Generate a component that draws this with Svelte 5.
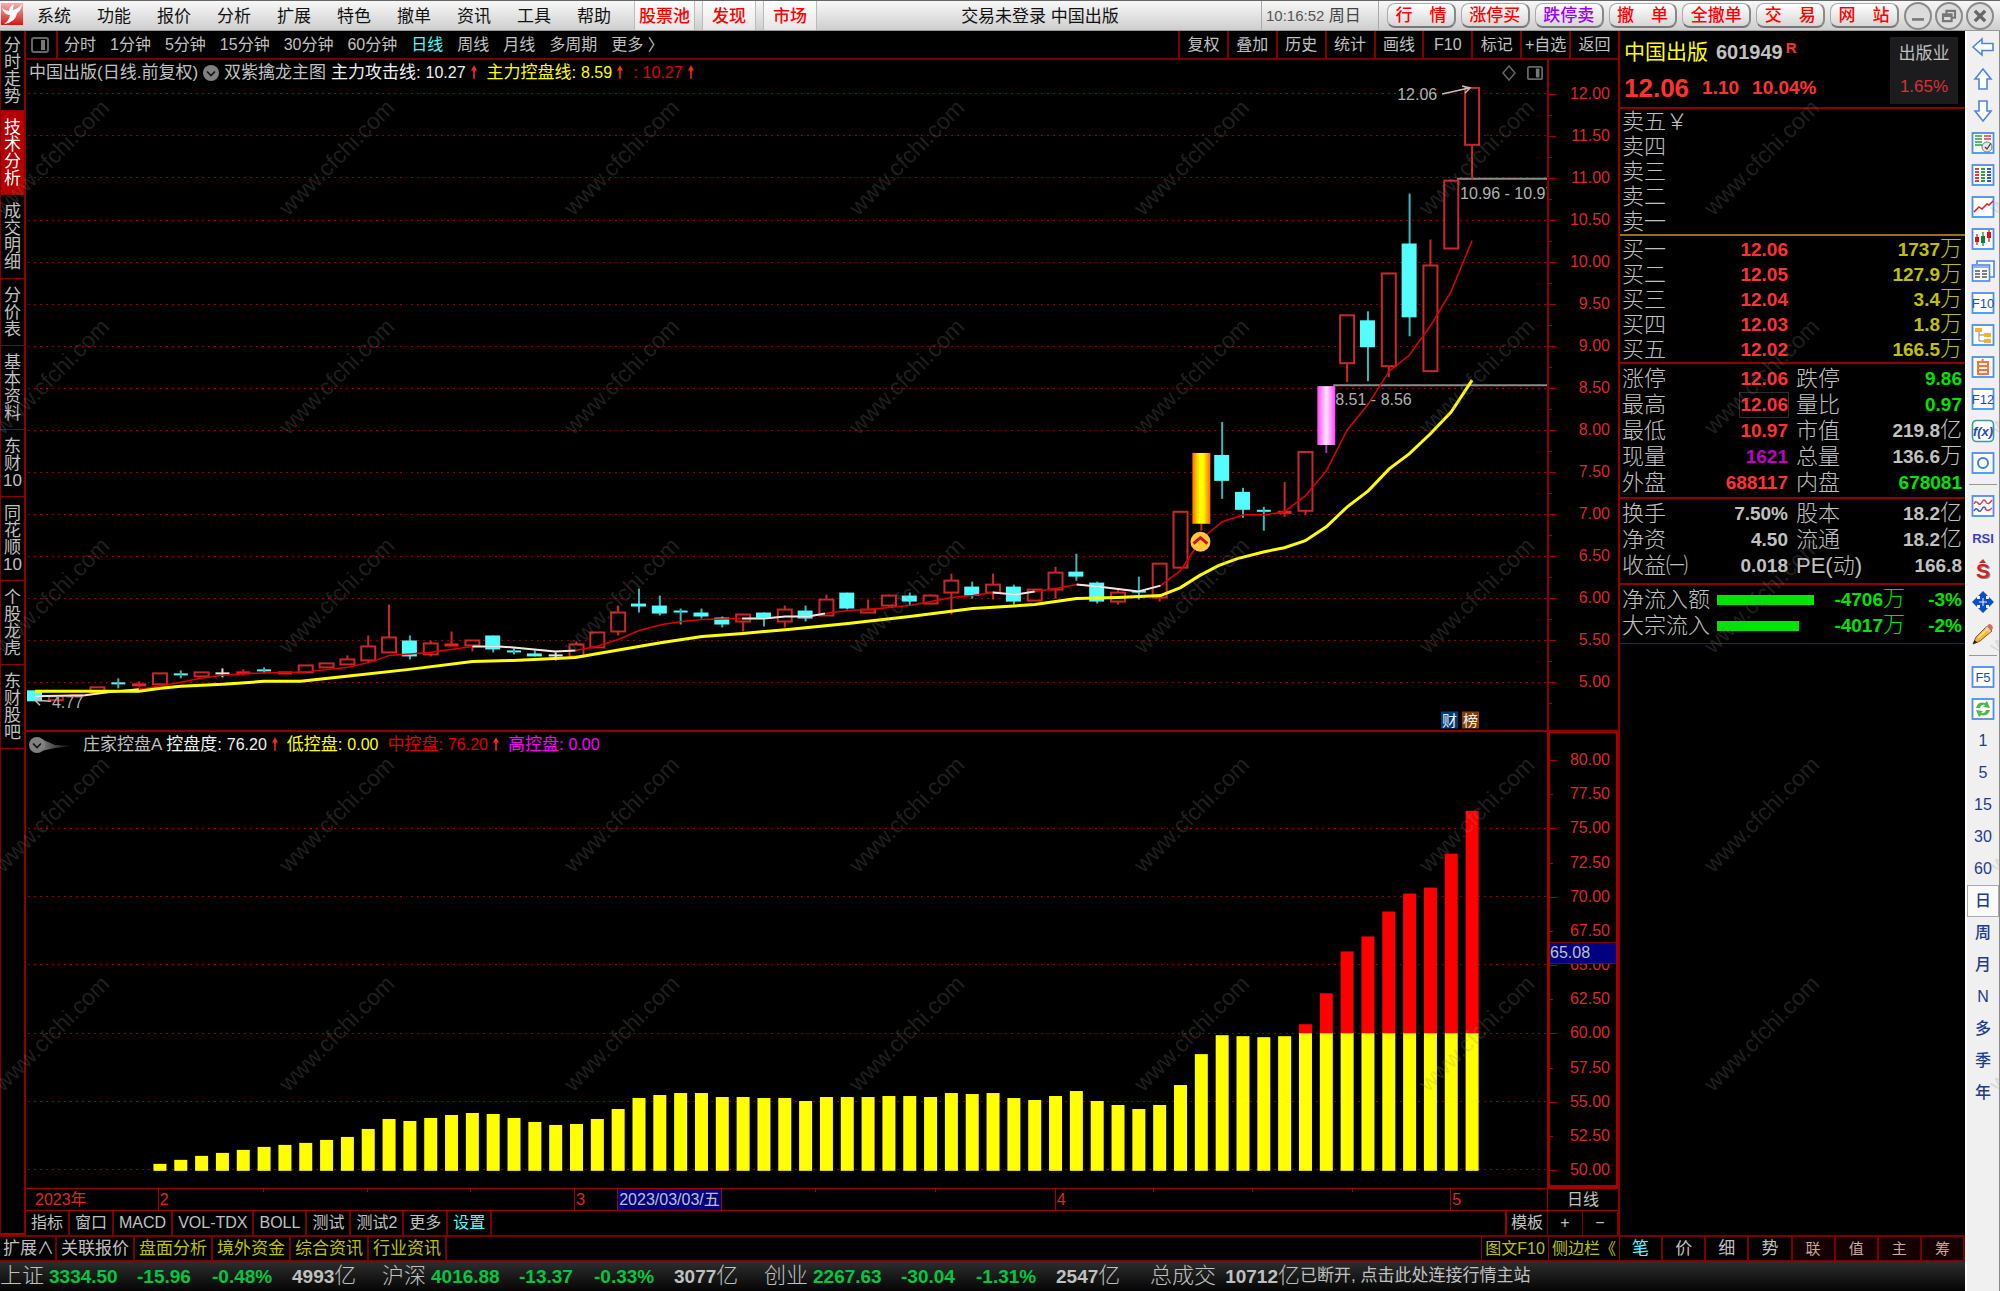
<script>
  const menus = ['系统', '功能', '报价', '分析', '扩展', '特色', '撤单', '资讯', '工具', '帮助'];
  const hot = ['股票池', '发现', '市场'];
  const trades = ['行　情', '涨停买', '跌停卖', '撤　单', '全撤单', '交　易', '网　站'];
  const periods = ['分时', '1分钟', '5分钟', '15分钟', '30分钟', '60分钟', '日线', '周线', '月线', '多周期', '更多 〉'];
  const actions = ['复权', '叠加', '历史', '统计', '画线', 'F10', '标记', '+自选', '返回'];
  const sides = [
    ['分', '时', '走', '势'], ['技', '术', '分', '析'], ['成', '交', '明', '细'], ['分', '价', '表'],
    ['基', '本', '资', '料'], ['东', '财', '10'], ['同', '花', '顺', '10'], ['个', '股', '龙', '虎'], ['东', '财', '股', '吧']
  ];
  const indicators = ['指标', '窗口', 'MACD', 'VOL-TDX', 'BOLL', '测试', '测试2', '更多', '设置'];
  const extras = ['扩展∧', '关联报价', '盘面分析', '境外资金', '综合资讯', '行业资讯'];
  const quoteTabs = ['笔', '价', '细', '势', '联', '值', '主', '筹'];
  const tools = [
    'left', 'up', 'down', 'report', 'grid', 'trend', 'candle', 'pages', 'F10', 'tree', 'self', 'F12', 'fx', 'ring', '-',
    'waves', 'rsi', 'dollar', 'move', 'pencil', '-', 'F5', 'refresh'
  ];
  const toolPeriods = ['1', '5', '15', '30', '60', '日', '周', '月', 'N', '多', '季', '年'];

  const asks = ['卖五￥', '卖四', '卖三', '卖二', '卖一'];
  const bids = [
    ['买一', '12.06', '1737', '万'], ['买二', '12.05', '127.9', '万'], ['买三', '12.04', '3.4', '万'],
    ['买四', '12.03', '1.8', '万'], ['买五', '12.02', '166.5', '万']
  ];
  const stats = [
    ['涨停', '12.06', '', 'red'], ['跌停', '9.86', '', 'green'],
    ['最高', '12.06', '', 'red boxed'], ['量比', '0.97', '', 'green'],
    ['最低', '10.97', '', 'red'], ['市值', '219.8', '亿', ''],
    ['现量', '1621', '', 'purple'], ['总量', '136.6', '万', ''],
    ['外盘', '688117', '', 'red'], ['内盘', '678081', '', 'green']
  ];
  const basics = [
    ['换手', '7.50%', ''], ['股本', '18.2', '亿'], ['净资', '4.50', ''],
    ['流通', '18.2', '亿'], ['收益㈠', '0.018', ''], ['PE(动)', '166.8', '']
  ];
  const flows = [['净流入额', 97, '-4706', '-3%'], ['大宗流入', 82, '-4017', '-2%']];
  const indices = [
    ['上证', '3334.50', '-15.96', '-0.48%', '4993'],
    ['沪深', '4016.88', '-13.37', '-0.33%', '3077'],
    ['创业', '2267.63', '-30.04', '-1.31%', '2547']
  ];

  // Chart canvas units: x runs 25..1548, the price pane 60..732, the indicator pane 732..1189.
  const X0 = 25, XW = 1523, P0 = 60, PH = 672, S0 = 732, SH = 457;
  const cx = (i) => 34 + i * 20.855;
  const py = (p) => 94 + (12 - p) * 84.3;
  const sy = (v) => 760 + (80 - v) * 13.7;
  const left = (x) => `${((x - X0) / XW) * 100}%`;
  const ptop = (y) => `${((y - P0) / PH) * 100}%`;
  const stop = (y) => `${((y - S0) / SH) * 100}%`;

  // [kind, body top, body bottom, wick top, wick bottom]; r rise, c fall, w flat
  const candles = [
    ['c', 692, 703], ['r', 698, 702], ['rf', 697], ['r', 689, 694], ['cf', 685, 0, 680, 690], ['rf', 686, 0, 683, 689],
    ['r', 675, 686], ['cf', 676, 0, 672, 680], ['r', 674, 678], ['wf', 675, 0, 670, 679], ['rf', 674, 0, 671, 677],
    ['cf', 672, 0, 669, 675], ['rf', 674, 0], ['r', 667, 674], ['r', 665, 669], ['r', 661, 666, 657, 666],
    ['r', 648, 662, 637, 664], ['r', 639, 654, 606, 654], ['c', 642, 658, 637, 661], ['r', 645, 656, 642, 658],
    ['rf', 646, 0, 633, 648], ['r', 642, 647, 642, 653], ['c', 637, 651, 637, 654], ['cf', 653, 0, 649, 656],
    ['c', 655, 658, 652, 658], ['wf', 657, 0, 654, 662], ['r', 646, 658, 643, 659], ['r', 634, 649],
    ['r', 614, 633, 607, 637], ['c', 605, 608, 590, 614], ['c', 607, 615, 597, 617], ['cf', 613, 0, 610, 626],
    ['c', 614, 618, 610, 620], ['c', 619, 626, 618, 629], ['r', 616, 623, 616, 633], ['c', 614, 620, 614, 628],
    ['r', 611, 623, 607, 629], ['c', 612, 620, 607, 623], ['r', 601, 617, 596, 617], ['c', 594, 610, 594, 611],
    ['r', 611, 614, 601, 614], ['r', 597, 607, 596, 609], ['c', 597, 603, 594, 607], ['r', 597, 605, 596, 605],
    ['r', 582, 594, 575, 616], ['c', 588, 597, 583, 600], ['r', 586, 594, 575, 601], ['c', 588, 603, 586, 606],
    ['r', 591, 602], ['r', 574, 591, 568, 600], ['c', 573, 578, 555, 582], ['c', 584, 603, 583, 605],
    ['r', 594, 603, 590, 606], ['cf', 593, 0, 578, 601], ['r', 565, 599, 565, 603], ['r', 513, 569],
    ['gold', 454, 525, 525, 532], ['c', 456, 482, 423, 500], ['c', 493, 511, 489, 519], ['cf', 512, 0, 508, 532],
    ['rf', 513, 0, 483, 518], ['r', 453, 512, 453, 516], ['pink', 387, 446, 446, 454], ['r', 316, 364, 316, 383],
    ['c', 321, 348, 312, 382], ['r', 274, 367, 274, 378], ['c', 244, 318, 194, 337], ['r', 266, 372, 240, 372],
    ['r', 181, 249], ['r', 88, 145, 88, 179]
  ];

  const attack = '34,698 84,697 107,694 146,690 180,684 200,680 222,677 250,675 285,674 300,674 346,669 369,664 389,657 429,654 472,648 498,648 513,649 555,653 575,652 596,648 618,641 639,632 662,626 682,623 702,621 742,620 764,620 785,618 808,618 825,615 848,612 868,611 910,607 931,603 952,599 973,597 993,594 1015,596 1035,593 1056,590 1077,586 1098,588 1139,593 1161,587 1181,572 1202,540 1223,523 1244,516 1265,516 1285,513 1306,497 1327,472 1348,431 1369,405 1390,372 1410,356 1431,327 1452,292 1473,241';
  const pauses = [
    '34,698 84,697 107,694 138,691', '472,648 498,648 513,649 555,653 575,652',
    '742,620 764,620 785,618 808,618 825,615', '993,594 1015,596 1035,593', '1077,586 1098,588 1139,593 1161,587'
  ];
  const control = '34,693 138,693 160,690 180,688 222,686 263,683 300,683 346,678 409,671 472,663 513,662 575,659 598,655 627,650 662,644 702,638 743,635 788,631 848,625 910,618 973,610 1035,606 1077,600 1118,599 1161,597 1181,589 1200,577 1219,567 1238,560 1265,553 1285,549 1306,542 1327,528 1348,508 1369,492 1390,470 1410,455 1431,435 1452,413 1473,381';

  const bars = [
    1165, 1161, 1157, 1154, 1151, 1148, 1146, 1144, 1141, 1138, 1130, 1120, 1122, 1119, 1116, 1114, 1115, 1119, 1123,
    1126, 1125, 1120, 1110, 1099, 1096, 1094, 1094, 1098, 1098, 1099, 1099, 1102, 1098, 1098, 1098, 1097, 1097, 1098, 1094,
    1095, 1094, 1099, 1101, 1097, 1092, 1102, 1106, 1110, 1106, 1086, 1055, 1036, 1037, 1038, 1037, 1025, 994, 952, 937,
    912, 894, 888, 854, 811
  ];

  const priceTicks = Array.from({ length: 15 }, (_, k) => 12 - k * 0.5);
  const valueTicks = Array.from({ length: 13 }, (_, k) => 80 - k * 2.5);
  const months = [[157, '2'], [574, '3'], [1055, '4'], [1451, '5']];
  const weeks = [262, 366, 470, 815, 935, 1153, 1253, 1353];
  const marks = [];
  for (let r = 0; r < 5; r++) for (let c = 0; c < 8; c++) marks.push([51 + c * 285, 157 + r * 219]);
</script>

{#snippet paneIcon()}
  <svg class="pane-icon" viewBox="0 0 18 16"><rect x="1" y="1" width="16" height="14" rx="2" fill="none" stroke="#666" stroke-width="2" /><rect x="10" y="3" width="4" height="10" fill="#777" /></svg>
{/snippet}

{#snippet fold()}
  <svg class="fold" viewBox="0 0 16 16"><circle cx="8" cy="8" r="8" fill="#808080" /><path d="M4 6.5l4 4 4-4" fill="none" stroke="#111" stroke-width="1.6" /></svg>
{/snippet}

{#snippet rise()}
  <svg class="rise" viewBox="0 0 8 18"><path d="M4 0l4 7H5v11H3V7H0z" fill="#ff2828" /></svg>
{/snippet}

{#snippet toolIcon(name)}
  <svg class="tool-icon" viewBox="0 0 24 24">
    {#if name === 'left'}
      <path d="M2 12l9-8v4.500h11v7H11V20z" fill="#fff" stroke="#4f83e3" stroke-width="1.600" />
    {:else if name === 'up'}
      <path d="M12 2l8 10h-4v10H8V12H4z" fill="#fff" stroke="#4f83e3" stroke-width="1.600" />
    {:else if name === 'down'}
      <path d="M12 22l8-10h-4V2H8v10H4z" fill="#fff" stroke="#4f83e3" stroke-width="1.600" />
    {:else if name === 'rsi'}
      <text x="12" y="17" text-anchor="middle" font-size="13" font-weight="700" fill="#3c3ccc">RSI</text>
    {:else if name === 'dollar'}
      <text x="13" y="21" text-anchor="middle" font-size="21" font-weight="700" fill="#888">S</text>
      <text x="12" y="20" text-anchor="middle" font-size="21" font-weight="700" fill="#c82828">S</text>
      <path d="M8 5l4-4 3 4z" fill="#c82828" />
    {:else if name === 'move'}
      <path d="M12 1l5 5H7zM12 23l5-5H7zM1 12l5-5v10zM23 12l-5-5v10z" fill="#0a50c0" />
      <path d="M12 5v14M5 12h14" stroke="#0a50c0" stroke-width="6" /><path d="M12 8v8M8 12h8" stroke="#f0f0f0" stroke-width="1" />
    {:else if name === 'pencil'}
      <path d="M2 22l3-7L16 4l5 5L9 19z" fill="#f5b63c" stroke="#7a5a2a" stroke-width="1" />
      <path d="M16 4l2-2q3 0 4 4l-2 3z" fill="#e0655a" /><path d="M14 6l4 5 2-2-4-5z" fill="#c8c8c8" />
      <path d="M2 22l1.500-4 3 2.500z" fill="#222" /><path d="M7 16L17 6.500" stroke="#ffe08a" stroke-width="1.500" />
    {:else if name === 'fx'}
      <rect x="1.500" y="1.500" width="21" height="21" rx="4" fill="#fff" stroke="#3c9a9a" stroke-width="1.600" />
      <text x="12" y="17" text-anchor="middle" font-size="13" font-style="italic" font-weight="700" fill="#2846c8">f(x)</text>
    {:else if name === 'pages'}
      <path d="M6 5V2h17v16h-4" fill="#fff" stroke="#4f83e3" stroke-width="1.600" />
      <rect x="1.500" y="6" width="17" height="16" fill="#fff" stroke="#4f83e3" stroke-width="1.600" />
      <path d="M4 12h5M11 12h5M4 15h5M11 15h5M4 18h5M11 18h5" stroke="#555" stroke-width="1.400" /><path d="M2 8h16" stroke="#8fb4f5" stroke-width="2" />
    {:else}
      <rect x="1.500" y="2" width="21" height="20" fill="#fff" stroke="#4f8fe8" stroke-width="1.800" />
      {#if name === 'report'}
        <path d="M4 5h7M4 8h7M4 11h7M4 14h7" stroke="#28a03c" stroke-width="1.600" /><path d="M13 5h7M13 8h7" stroke="#e03c3c" stroke-width="1.600" />
        <circle cx="16" cy="16" r="5" fill="#e8e8e8" stroke="#777" /><path d="M14 16l2 2 4-6" fill="none" stroke="#444" stroke-width="1.300" />
      {:else if name === 'grid'}
        <path d="M6 5v15" stroke="#e03c3c" stroke-width="4" stroke-dasharray="2 1" /><path d="M12 5v15" stroke="#28a03c" stroke-width="4" stroke-dasharray="2 1" /><path d="M18 5v15" stroke="#3c50e0" stroke-width="4" stroke-dasharray="2 1" />
      {:else if name === 'trend'}
        <path d="M3 17l5-5 3 2 5-5 2 1 4-4" fill="none" stroke="#e02020" stroke-width="1.500" />
      {:else if name === 'candle'}
        <path d="M6 7v11M18 3v12" stroke="#e01010" stroke-width="1.200" /><path d="M12 5v14" stroke="#108030" stroke-width="1.200" />
        <rect x="4" y="10" width="4" height="5" fill="#e01010" /><rect x="10" y="9" width="4" height="7" fill="#108030" /><rect x="16" y="5" width="4" height="6" fill="#e01010" />
      {:else if name === 'tree'}
        <path d="M8 8v10h6M8 12h6" fill="none" stroke="#888" /><path d="M4 5h7v4H4zM13 10h7v4h-7zM13 16h7v4h-7z" fill="#f5b428" />
      {:else if name === 'self'}
        <path d="M12 4l-1 3M7 7h10v12H7zM7 11h10M7 15h10" fill="none" stroke="#ff7030" stroke-width="2" />
      {:else if name === 'ring'}
        <circle cx="12" cy="12" r="5" fill="none" stroke="#3c82dc" stroke-width="2" />
      {:else if name === 'waves'}
        <path d="M3 10q2-4 4-1t4-1 4 0 6-2" fill="none" stroke="#e03c50" stroke-width="1.500" /><path d="M3 17q2-4 4-1t4-1 4 0" fill="none" stroke="#3c50e0" stroke-width="1.500" /><path d="M14 15q3 3 7-1" fill="none" stroke="#e03c50" stroke-width="1.500" />
      {:else if name === 'refresh'}
        <path d="M5 11q2-7 9-5l2-2 3 7-7-1 2-2q-4-1-5 3z" fill="#4cb848" /><path d="M19 13q-2 7-9 5l-2 2-3-7 7 1-2 2q4 1 5-3z" fill="#4cb848" />
      {:else}
        <text x="12" y="17" text-anchor="middle" font-size="13" fill="#2846c8">{name}</text>
      {/if}
    {/if}
  </svg>
{/snippet}

<div class="app">
  <header class="topbar">
    <svg class="logo" viewBox="0 0 24 24">
      <defs><linearGradient id="lg" x1="0" y1="0" x2="0" y2="1"><stop offset="0" stop-color="#f4b0b0" /><stop offset="1" stop-color="#d01818" /></linearGradient></defs>
      <rect x="1" y="1" width="22" height="22" fill="url(#lg)" /><path d="M2 6q2 7 8 7-1 6-6 9 12-2 13-11 4-2 5-9-4 5-9 6 0-3 1-6-5 3-5 7-4 0-7-3z" fill="#fff" />
    </svg>
    <nav class="menus">{#each menus as m}<button>{m}</button>{/each}</nav>
    <nav class="hot">{#each hot as h}<button>{h}</button>{/each}</nav>
    <div class="title">交易未登录 中国出版</div>
    <div class="clock"><span>10:16:52</span> 周日</div>
    <nav class="trades">{#each trades as t, i}<button class:violet={i === 2}>{t}</button>{/each}</nav>
    <div class="wins">
      <button aria-label="最小化"><svg viewBox="0 0 28 28"><path d="M7 18h14" stroke="#777" stroke-width="3" /></svg></button>
      <button aria-label="还原"><svg viewBox="0 0 28 28"><path d="M11 12V8h10v8h-4M7 12h10v8H7zM7 14h10" fill="none" stroke="#777" stroke-width="2.500" /></svg></button>
      <button aria-label="关闭"><svg viewBox="0 0 28 28"><path d="M8 8l12 12M20 8L8 20" stroke="#666" stroke-width="4" /></svg></button>
    </div>
  </header>

  <div class="body">
    <div class="desk">
      <div class="upper">
        <nav class="side">
          {#each sides as s, i}<button class:active={i === 1}>{#each s as ch}<span>{ch}</span>{/each}</button>{/each}
        </nav>

        <main class="center">
          <div class="periods">
            <button class="pane-toggle" aria-label="分栏">{@render paneIcon()}</button>
            <div class="list">{#each periods as p}<button class:cyan={p === '日线'}>{p}</button>{/each}</div>
            <div class="actions">{#each actions as a}<button>{a}</button>{/each}</div>
          </div>

          <section class="pane price">
            <div class="plot">
              <svg class="canvas" viewBox="{X0} {P0} {XW} {PH}" preserveAspectRatio="none">
                <defs>
                  <linearGradient id="gold"><stop offset="0" stop-color="#ff6a00" /><stop offset="0.4" stop-color="#ffff00" /><stop offset="0.6" stop-color="#ffff00" /><stop offset="1" stop-color="#ff6a00" /></linearGradient>
                  <linearGradient id="pink"><stop offset="0" stop-color="#ff40ff" /><stop offset="0.5" stop-color="#ffe8ff" /><stop offset="1" stop-color="#ff40ff" /></linearGradient>
                </defs>
                {#each priceTicks as p}<line class="dots" x1={X0 + 2} x2={X0 + XW} y1={py(p)} y2={py(p)} />{/each}
                <path d="M1458 179H1548M1334 386H1548" stroke="#8c8c8c" stroke-width="2" />
                {#each candles as [k, a, b, wt, wb], i}
                  {@const x = cx(i)}
                  {#if k.endsWith('f')}
                    <rect class={k} x={x - 7} y={a - 1} width="14" height={k === 'rf' ? 3 : 2} />
                    {#if wt}<line class="wick {k[0]}" x1={x} x2={x} y1={wt} y2={wb} />{/if}
                  {:else if k === 'r'}
                    {#if wt}<path class="wick r" d="M{x} {wt}V{a}M{x} {b}V{wb}" />{/if}
                    <rect class="hollow" x={x - 7} y={a} width="14" height={b - a} />
                  {:else if k === 'c'}
                    {#if wt}<line class="wick c" x1={x} x2={x} y1={wt} y2={wb} />{/if}
                    <rect class="cf" x={x - 8} y={a} width="15" height={b - a} />
                  {:else}
                    <line class="wick {k}" x1={x} x2={x} y1={wt} y2={wb} />
                    <rect x={x - 9} y={a} width="18" height={b - a} fill="url(#{k})" />
                  {/if}
                {/each}
                <polyline points={attack} fill="none" stroke="#e00000" stroke-width="1.500" />
                {#each pauses as p}<polyline points={p} fill="none" stroke="#e8e8e8" stroke-width="2" />{/each}
                <polyline points={control} fill="none" stroke="#ffff00" stroke-width="3" />
                <path d="M1443 94L1470 88M1463 86L1471 88L1466 93M50 703L34 702M40 699L34 702L39 707" fill="none" stroke="#c0c0c0" stroke-width="1.500" />
                <circle cx="1201" cy="543" r="10" fill="#ffc83c" /><path d="M1194 545l7-6 7 6" fill="none" stroke="#c81414" stroke-width="3" />
              </svg>
              <span class="note" style:left={left(1398)} style:top={ptop(95)}>12.06</span>
              <span class="note" style:left={left(1461)} style:top={ptop(194)}>10.96 - 10.97</span>
              <span class="note" style:left={left(1336)} style:top={ptop(401)}>8.51 - 8.56</span>
              <span class="note" style:left={left(51)} style:top={ptop(705)}>4.77</span>
              <span class="tag cai" style:left={left(1442)} style:top={ptop(722)}>财</span>
              <span class="tag bang" style:left={left(1463)} style:top={ptop(722)}>榜</span>
              <div class="legend">
                <span>中国出版(日线.前复权)</span>{@render fold()}<span>双紫擒龙主图</span>
                <span class="white pair">主力攻击线: <b>10.27</b>{@render rise()}</span>
                <span class="yellow pair">主力控盘线: <b>8.59</b>{@render rise()}</span>
                <span class="crimson pair">: <b>10.27</b>{@render rise()}</span>
                <span class="corner"><svg viewBox="0 0 16 16"><path d="M8 1l6 7-6 7-6-7z" fill="none" stroke="#666" stroke-width="1.500" /></svg>{@render paneIcon()}</span>
              </div>
            </div>
            <div class="axis">
              {#each priceTicks as p}
                <i class="tick" style:top={ptop(py(p))}></i><i class="tick minor" style:top={ptop(py(p - 0.25))}></i>
                <span style:top={ptop(py(p))}>{p.toFixed(2)}</span>
              {/each}
            </div>
          </section>

          <section class="pane sub">
            <div class="plot">
              <svg class="canvas" viewBox="{X0} {S0} {XW} {SH}" preserveAspectRatio="none">
                {#each valueTicks as v}{#if v % 5 === 0 && v < 80}<line class="dots" x1={X0 + 2} x2={X0 + XW} y1={sy(v)} y2={sy(v)} />{/if}{/each}
                {#each bars as t, i}
                  {@const x = cx(i + 6) - 6.5}
                  {#if t < 1034}<rect {x} y={t} width="13" height={1034 - t} fill="#f00" />{/if}
                  <rect {x} y={Math.max(t, 1034)} width="13" height={1172 - Math.max(t, 1034)} fill="#ff0" />
                {/each}
              </svg>
              <div class="legend second">
                {@render fold()}
                <svg class="smear" viewBox="0 0 32 16"><defs><linearGradient id="sm"><stop offset="0" stop-color="#808080" /><stop offset="1" stop-color="#808080" stop-opacity="0" /></linearGradient></defs><path d="M0 2L14 8 32 9 14 11 0 14z" fill="url(#sm)" /></svg>
                <span class="name">庄家控盘A</span>
                <span class="white pair">控盘度: <b>76.20</b>{@render rise()}</span>
                <span class="yellow pair">低控盘: <b>0.00</b></span>
                <span class="crimson pair">中控盘: <b>76.20</b>{@render rise()}</span>
                <span class="magenta pair">高控盘: <b>0.00</b></span>
              </div>
            </div>
            <div class="axis boxed-axis">
              {#each valueTicks as v}
                <i class="tick" class:minor={v % 5 !== 0} style:top={stop(sy(v))}></i>
                <span style:top={stop(sy(v))}>{v.toFixed(2)}</span>
              {/each}
              <em style:top={stop(953)}>65.08</em>
            </div>
          </section>

          <div class="dates">
            <div class="scale">
              <span style:left={left(34)}>2023年</span>
              {#each months as [x, m]}<span class="month" style:left={left(x)}>{m}</span>{/each}
              {#each weeks as x}<i style:left={left(x)}></i>{/each}
              <span class="cursor" style:left={left(617)}>2023/03/03/五</span>
            </div>
            <div class="unit">日线</div>
          </div>

          <div class="tabs">
            {#each indicators as t}<button class:cyan={t === '设置'}>{t}</button>{/each}
            <button class="template">模板</button><button class="zoom">+</button><button class="zoom">−</button>
          </div>
        </main>

        <aside class="quote">
          <div class="head">
            <div class="names">
              <div><strong>中国出版</strong><span class="code">601949</span><sup>R</sup></div>
              <div class="now"><b>12.06</b><span>1.10</span><span>10.04%</span></div>
            </div>
            <div class="industry"><span>出版业</span><span>1.65%</span></div>
          </div>
          <table class="book asks"><tbody>
            {#each asks as a}<tr><th>{a}</th><td></td><td></td></tr>{/each}
          </tbody></table>
          <table class="book bids"><tbody>
            {#each bids as [n, p, v, u]}<tr><th>{n}</th><td class="red">{p}</td><td class="olive">{v}<u>{u}</u></td></tr>{/each}
          </tbody></table>
          <dl class="stats">
            {#each stats as [n, v, u, c]}<div><dt>{n}</dt><dd class={c}>{v}<u>{u}</u></dd></div>{/each}
          </dl>
          <dl class="stats basics">
            {#each basics as [n, v, u]}<div><dt>{n}</dt><dd>{v}<u>{u}</u></dd></div>{/each}
          </dl>
          <div class="flows">
            {#each flows as [n, w, v, p]}
              <div><span>{n}</span><span class="track"><i style:width="{w}%"></i></span><b>{v}<u>万</u></b><b>{p}</b></div>
            {/each}
          </div>
        </aside>
      </div>

      <div class="lower">
        <div class="extras">{#each extras as e, i}<button class:olive={i > 1}>{e}</button>{/each}</div>
        <button class="olive f10">图文F10</button><button class="olive bar">侧边栏《</button>
        <div class="qtabs">{#each quoteTabs as q, i}<button class:cyan={i === 0} class:dim={i > 3}>{q}</button>{/each}</div>
      </div>

      <footer class="ticker">
        {#each indices as [n, v, d, p, a]}
          <div class="idx"><span>{n}</span><b>{v}</b><b>{d}</b><b>{p}</b><span class="amt"><b>{a}</b>亿</span></div>
        {/each}
        <div class="total">总成交 <b>10712</b>亿</div>
        <button>已断开, 点击此处连接行情主站</button>
      </footer>
    </div>

    <nav class="tools">
      {#each tools as t}{#if t === '-'}<hr />{:else}<button aria-label={t}>{@render toolIcon(t)}</button>{/if}{/each}
      {#each toolPeriods as t}<button class:on={t === '日'}>{t}</button>{/each}
    </nav>
  </div>

  <svg class="marks" aria-hidden="true">
    {#each marks as [x, y]}<text text-anchor="middle" transform="translate({x + 6} {y + 6}) rotate(-45)">www.cfchi.com</text>{/each}
  </svg>
</div>

<style>
  :global(body) { margin: 0; background: #000; }
  .app {
    position: relative; display: flex; flex-direction: column; min-height: 100vh; overflow: hidden;
    background: #000; color: #c0c0c0;
    font: 16px/20px "Liberation Sans", "Noto Sans CJK SC", sans-serif;
  }
  .app :global(*) { box-sizing: border-box; }
  button { margin: 0; padding: 0; border: 0; background: none; color: inherit; font: inherit; white-space: nowrap; cursor: pointer; }
  svg { display: block; }
  u { text-decoration: none; font-weight: 300; font-size: 22px; line-height: 20px; }

  .topbar {
    display: flex; align-items: stretch; height: 31px; flex: none; border-top: 1px solid #666; border-bottom: 1px solid #999;
    background: linear-gradient(#f8f8f8, #cecece); color: #111; font-size: 17px;
  }
  .logo { width: 24px; height: 24px; margin-top: 1px; }
  .menus { display: flex; }
  .menus button { width: 60px; padding-top: 2px; }
  .hot { display: flex; gap: 7px; margin-left: 10px; }
  .hot button { padding: 2px 9px 0; border: 1px solid #bbb; border-width: 0 1px; background: linear-gradient(#fff, #e6e6e6); color: #f00; font-weight: 500; }
  .hot button:first-child { padding: 2px 4px 0; }
  .title { flex: 1; padding: 2px 0 0 2px; text-align: center; align-self: center; }
  .clock { width: 118px; padding-left: 4px; border: 1px solid #aaa; border-width: 0 1px; color: #444; font-size: 16px; line-height: 30px; white-space: nowrap; }
  .clock span { font-size: 15px; color: #555; }
  .trades { display: flex; gap: 5px; width: 512px; margin-left: 8px; align-items: center; }
  .trades button {
    flex: 1; height: 25px; padding-top: 1px; line-height: 22px; border: 1px solid #aaa; border-bottom: 2px solid #777; border-right: 2px solid #888; border-radius: 8px;
    background: linear-gradient(#fff, #d6d6d6); color: #f00; font-weight: 500;
  }
  .trades .violet { color: #90f; }
  .wins { display: flex; gap: 3px; align-items: center; margin: 0 6px 0 5px; }
  .wins button { width: 28px; height: 28px; border: 2px solid #8a8a8a; border-radius: 50%; background: #dcdcdc; }
  .wins svg { width: 24px; height: 24px; }

  .body { flex: 1; display: flex; }
  .desk { flex: 1; min-width: 0; display: flex; flex-direction: column; }
  .upper { flex: 1; display: flex; }

  .side { width: 26px; flex: none; border: 1px solid #800000; border-right: 2px solid #8b0000; border-top: 0; border-bottom: 2px solid #a00000; font-size: 17px; }
  .side button { display: flex; flex-direction: column; width: 100%; padding: 8px 0 7px; border-bottom: 1px solid #900000; }
  .side button:first-child { padding: 6px 0 5px; }
  .side span { line-height: 17px; }
  .side .active { background: #b40000; color: #fff; }

  .center { flex: 1; min-width: 0; display: flex; flex-direction: column; }
  .periods { display: flex; height: 29px; flex: none; border-bottom: 2px solid #780000; }
  .pane-toggle { width: 32px; padding-left: 5px; border-right: 2px solid #800000; }
  .pane-icon { width: 18px; height: 16px; }
  .list { display: flex; gap: 14px; margin-left: 6px; flex: 1; }
  .actions { display: grid; grid-template-columns: repeat(9, 1fr); width: 440px; }
  .actions button { border-left: 2px solid #800000; }
  .cyan { color: #54fcfc; }

  .pane { display: grid; grid-template-columns: minmax(0, 1fr) 71px; }
  .price { flex: 672 1 0; min-height: 400px; }
  .sub { flex: 457 1 0; min-height: 270px; border-top: 2px solid #900000; }
  .plot { position: relative; overflow: hidden; }
  .canvas { position: absolute; inset: 0; width: 100%; height: 100%; }
  .dots { stroke: #900000; stroke-width: 1; stroke-dasharray: 2 4; shape-rendering: crispEdges; }
  .wick { stroke-width: 2; stroke: #c82828; fill: none; }
  .wick.c { stroke: #38b8b8; }
  .wick.w { stroke: #ddd; }
  .wick.pink { stroke: #b030b0; }
  .hollow { fill: #000; stroke: #c82828; stroke-width: 2; }
  .cf { fill: #54fcfc; }
  .rf { fill: #f02020; }
  .wf { fill: #e8e8e8; }
  .note { position: absolute; transform: translateY(-50%); white-space: nowrap; color: #b0b0b0; }
  .tag { position: absolute; transform: translateY(-50%); width: 17px; font-size: 15px; line-height: 17px; text-align: center; color: #e8f0ff; }
  .cai { background: #003c78; }
  .bang { background: #824000; }
  .legend { position: relative; display: flex; align-items: center; gap: 5px; height: 25px; padding-left: 3px; font-size: 17px; white-space: nowrap; }
  .legend b { font-weight: 400; font-size: 16px; }
  .fold { width: 16px; height: 16px; flex: none; }
  .smear { width: 32px; height: 16px; margin-left: -8px; }
  .rise { display: inline-block; width: 6px; height: 18px; margin-left: 5px; vertical-align: -3px; }
  .pair { margin-right: 5px; }
  .second { gap: 4px; }
  .second .pair { margin-right: 5px; }
  .second .name { margin-left: 6px; }
  .white { color: #f0f0f0; }
  .yellow { color: #ff0; }
  .crimson { color: #e00000; }
  .magenta { color: #f0f; }
  .corner { display: flex; align-items: center; gap: 10px; margin-left: auto; padding-right: 4px; }
  .corner svg { width: 16px; height: 16px; }

  .axis { position: relative; border-left: 2px solid #900000; color: #dc2828; }
  .axis span { position: absolute; right: 8px; transform: translateY(-50%); }
  .axis .tick { position: absolute; left: 0; width: 7px; height: 1px; background: #a00000; }
  .axis .minor { width: 3px; }
  .boxed-axis { border-left: 3px solid #a80000; box-shadow: inset -2px -3px #a80000, inset 0 1px #a80000; }
  .axis em { position: absolute; left: 0; right: 2px; transform: translateY(-50%); border: 1px solid #800000; border-width: 1px 0; background: #000080; color: #c0c0c0; font-style: normal; }

  .dates { display: grid; grid-template-columns: minmax(0, 1fr) 71px; height: 23px; flex: none; border: 1px solid #a00000; border-width: 1px 0; color: #dc2828; line-height: 22px; }
  .scale { position: relative; }
  .scale span, .scale i { position: absolute; top: 0; }
  .scale i { width: 1px; height: 3px; background: #a00000; }
  .scale .month { padding-left: 1px; border-left: 1px solid #a00000; }
  .scale .cursor { padding: 0 1px; border: 1px solid #a00000; border-width: 0 1px; background: #000080; color: #c0c0c0; line-height: 21px; }
  .unit { border-left: 1px solid #a00000; text-align: center; color: #c0c0c0; }

  .tabs { display: flex; height: 24px; flex: none; }
  .tabs button { padding: 0 5px; border-right: 2px solid #780000; }
  .tabs .template { margin-left: auto; padding: 0 4px; border-left: 2px solid #a00000; border-right-width: 1px; }
  .tabs .zoom { width: 35px; border-right-width: 1px; }

  .quote { width: 347px; flex: none; border-left: 2px solid #900000; }
  .quote .red { color: #ff3232; }
  .quote .green { color: #00e400; }
  .quote .purple { color: #c000c0; }
  .head { display: flex; justify-content: space-between; height: 78px; padding: 6px 7px 3px 4px; border-bottom: 2px solid #900000; }
  .names > div { display: flex; align-items: center; height: 30px; }
  .names .now { height: 42px; gap: 13px; color: #ff3232; font-size: 19px; font-weight: 700; }
  .now b { font-size: 26px; }
  .head strong { color: #ff0; font-size: 21px; font-weight: 400; }
  .code { margin-left: 8px; font-size: 20px; font-weight: 700; }
  sup { margin: 0 0 10px 3px; color: #ff3232; font-size: 15px; font-weight: 700; line-height: 15px; }
  .industry { display: flex; flex-direction: column; justify-content: space-around; align-items: center; width: 68px; background: #1c1c1f; font-size: 17px; }
  .industry span:last-child { color: #d83232; }
  .book { width: 100%; border-collapse: separate; border-spacing: 0; table-layout: fixed; }
  .book tr { height: 25px; }
  .book th { width: 86px; padding: 0 0 0 2px; text-align: left; font-size: 22px; line-height: 24px; font-weight: 300; white-space: nowrap; }
  .book td { padding: 0; text-align: right; font-size: 19px; font-weight: 700; line-height: 22px; }
  .book td:nth-child(2) { width: 82px; }
  .book td:last-child { padding-right: 3px; }
  .asks { border-bottom: 2px solid #967020; }
  .bids { padding-top: 1px; border-bottom: 2px solid #900000; }
  .olive { color: #c0c000; }
  .stats { display: grid; grid-template-columns: 1fr 1fr; column-gap: 8px; margin: 0; padding: 2px 3px 1px 2px; border-bottom: 2px solid #900000; }
  .stats div { display: flex; justify-content: space-between; align-items: center; height: 26px; }
  .stats dt { font-size: 22px; font-weight: 300; line-height: 26px; white-space: nowrap; }
  .stats dd { margin: 0; font-size: 19px; font-weight: 700; line-height: 24px; white-space: nowrap; }
  .stats .boxed { outline: 1px solid #2c2c2c; }
  .basics { padding-bottom: 4px; }
  .flows { padding: 2px 3px 4px 2px; border-bottom: 1px solid #900000; }
  .flows div { display: grid; grid-template-columns: 95px 100px 1fr 57px; align-items: center; height: 26px; font-size: 22px; font-weight: 300; line-height: 26px; }
  .flows i { display: block; height: 10px; background: #00e400; }
  .flows b { text-align: right; color: #00e400; font-size: 19px; font-weight: 700; white-space: nowrap; }

  .lower { display: flex; height: 26px; flex: none; border: 2px solid #780000; border-width: 2px 0 1px; font-size: 17px; }
  .extras { display: flex; flex: 1; }
  .extras button { padding: 0 4px; border-right: 2px solid #780000; }
  .extras button:first-child { padding: 0 1px 0 3px; }
  .f10 { width: 68px; border-left: 1px solid #900000; border-right: 1px solid #900000; }
  .bar { width: 71px; overflow: hidden; border-right: 1px solid #900000; }
  .lower .f10, .lower .bar { font-size: 16px; }
  .qtabs { display: grid; grid-template-columns: repeat(8, 1fr); width: 345px; }
  .qtabs button { border-right: 2px solid #780000; }
  .qtabs .dim { background: #140000; color: #c8a8a0; font-size: 15px; }

  .ticker { display: flex; align-items: center; height: 30px; flex: none; background: linear-gradient(#2e2e2e, #050505); font-size: 22px; font-weight: 300; line-height: 28px; white-space: nowrap; }
  .ticker b { font-size: 19px; font-weight: 700; }
  .idx { display: grid; grid-template-columns: 49px 88px 75px 80px 90px; align-items: baseline; }
  .idx > b { color: #00c840; }
  .total { margin-left: 4px; }
  .total b { margin-left: 3px; }
  .ticker button { font-size: 17px; font-weight: 400; }

  .tools { width: 35px; flex: none; border-left: 2px solid #fff; border-right: 1px solid #888; background: #f0f0f0; color: #1e3c8c; }
  .tools button { display: flex; align-items: center; justify-content: center; width: 100%; height: 32px; font-size: 16px; font-weight: 500; }
  .tools .on { border: 1px solid #aaa; background: #fafafa; }
  .tool-icon { width: 24px; height: 24px; }
  .tools hr { height: 1px; margin: 5px 2px; border: 0; background: #999; }

  .marks { position: absolute; inset: 0; width: 100%; height: 100%; pointer-events: none; }
  .marks text { font-size: 23px; fill: #8c8c8c; fill-opacity: 0.24; }
</style>
